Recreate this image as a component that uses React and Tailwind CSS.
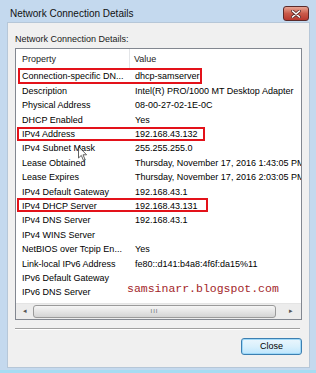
const rows = [
  ["Connection-specific DN...", "dhcp-samserver"],
  ["Description", "Intel(R) PRO/1000 MT Desktop Adapter"],
  ["Physical Address", "08-00-27-02-1E-0C"],
  ["DHCP Enabled", "Yes"],
  ["IPv4 Address", "192.168.43.132"],
  ["IPv4 Subnet Mask", "255.255.255.0"],
  ["Lease Obtained", "Thursday, November 17, 2016 1:43:05 PM"],
  ["Lease Expires", "Thursday, November 17, 2016 2:03:05 PM"],
  ["IPv4 Default Gateway", "192.168.43.1"],
  ["IPv4 DHCP Server", "192.168.43.131"],
  ["IPv4 DNS Server", "192.168.43.1"],
  ["IPv4 WINS Server", ""],
  ["NetBIOS over Tcpip En...", "Yes"],
  ["Link-local IPv6 Address", "fe80::d141:b4a8:4f6f:da15%11"],
  ["IPv6 Default Gateway", ""],
  ["IPv6 DNS Server", ""],
];

const CloseX = () => (
  <div className="w-[26px] h-[15px] rounded-[3px] border border-[#5a2a2a] bg-gradient-to-b from-[#e8a493] via-[#c95a4a] to-[#b8372e] flex items-center justify-center">
    <svg width="10" height="8" viewBox="0 0 10 8">
      <path d="M1.5 1 L8.5 7 M8.5 1 L1.5 7" stroke="#5a2a2a" strokeWidth="3" strokeLinecap="round" />
      <path d="M1.5 1 L8.5 7 M8.5 1 L1.5 7" stroke="#ffffff" strokeWidth="1.6" strokeLinecap="round" />
    </svg>
  </div>
);

const Cursor = () => (
  <svg className="absolute left-[78px] top-[146px] opacity-80" width="10" height="16" viewBox="0 0 10 16">
    <path d="M0.5 0.5 L0.5 12 L3.3 9.4 L5.5 14.5 L7.2 13.8 L5 8.8 L8.6 8.8 Z" fill="#ffffff" stroke="#3a3a3a" strokeWidth="1" />
  </svg>
);

const App = () => {
  return (
    <div className="relative w-[316px] h-[373px] bg-[#c4d9ee] border-b-[3px] border-[#a6dcf2] flex flex-col font-['Liberation_Sans',Arial,sans-serif] text-black overflow-hidden">
      {/* title bar */}
      <div className="h-[22px] flex items-start justify-between pl-[10px] pr-[7px] pt-[6px]">
        <span className="mt-[2px] text-[10px] leading-[12px] text-[#111]">Network Connection Details</span>
        <CloseX />
      </div>

      {/* client area */}
      <div className="ml-[7px] mr-[6px] h-[346px] bg-[#f0f0f0] border border-[#b6c7d8] flex flex-col px-[7px]">
        <div className="pt-[9px] text-[9px] leading-[14px] text-[#1a1a1a]">Network Connection Details:</div>

        <div className="mt-[2px] h-[272px] border border-[#828790] bg-white flex flex-col">
          <div className="h-[21px] flex items-center text-[9px] text-[#222]">
            <div className="w-[114px] pl-[6px] border-r border-[#e3e5e8] h-full flex items-center">Property</div>
            <div className="pl-[4px]">Value</div>
          </div>

          <div className="flex-1 overflow-hidden">
            {rows.map(([k, v]) => (
              <div key={k} className="h-[14.4px] flex items-center text-[9px] whitespace-nowrap">
                <div className="w-[115px] shrink-0 pl-[6px]">{k}</div>
                <div className="pl-[4px]">{v}</div>
              </div>
            ))}
          </div>

          {/* horizontal scrollbar */}
          <div className="h-[16px] bg-[#ececec] border-t border-[#e4e4e4] flex items-center">
            <div className="w-[17px] flex justify-center text-[7px] text-[#555]">◂</div>
            <div className="w-[243px] h-[13px] rounded-[3px] border border-[#9a9a9a] bg-gradient-to-b from-[#f6f6f6] to-[#d4d4d4] flex items-center justify-center">
              <span className="text-[6px] tracking-[1px] text-[#666]">III</span>
            </div>
            <div className="flex-1 flex justify-end pr-[8px] text-[7px] text-[#555]">▸</div>
          </div>
        </div>

        <div className="mt-[8px] border-t border-[#a0a0a0] border-b border-b-white mr-[2px]" />

        <div className="mt-[8px] flex justify-end">
          <button className="w-[61px] h-[17px] rounded-[3px] border border-[#3c7fb1] bg-gradient-to-b from-[#eaf6fd] via-[#d9f0fc] to-[#bee6fd] text-[9px] leading-[15px] text-black shadow-[inset_0_0_0_1px_#9ed8f8]">
            Close
          </button>
        </div>
      </div>

      {/* annotations */}
      <div className="absolute left-[18px] top-[68px] w-[184px] h-[16px] border-2 border-[#e3121a]" />
      <div className="absolute left-[17px] top-[127px] w-[188px] h-[14px] border-2 border-[#e3121a]" />
      <div className="absolute left-[17px] top-[198px] w-[191px] h-[14px] border-2 border-[#e3121a]" />
      <div className="absolute left-[127px] top-[282px] text-[11.5px] leading-[14px] font-['Liberation_Mono','Courier_New',monospace] text-[#a3262a]">
        samsinarr.blogspot.com
      </div>
      <Cursor />
    </div>
  );
};

export default App;
